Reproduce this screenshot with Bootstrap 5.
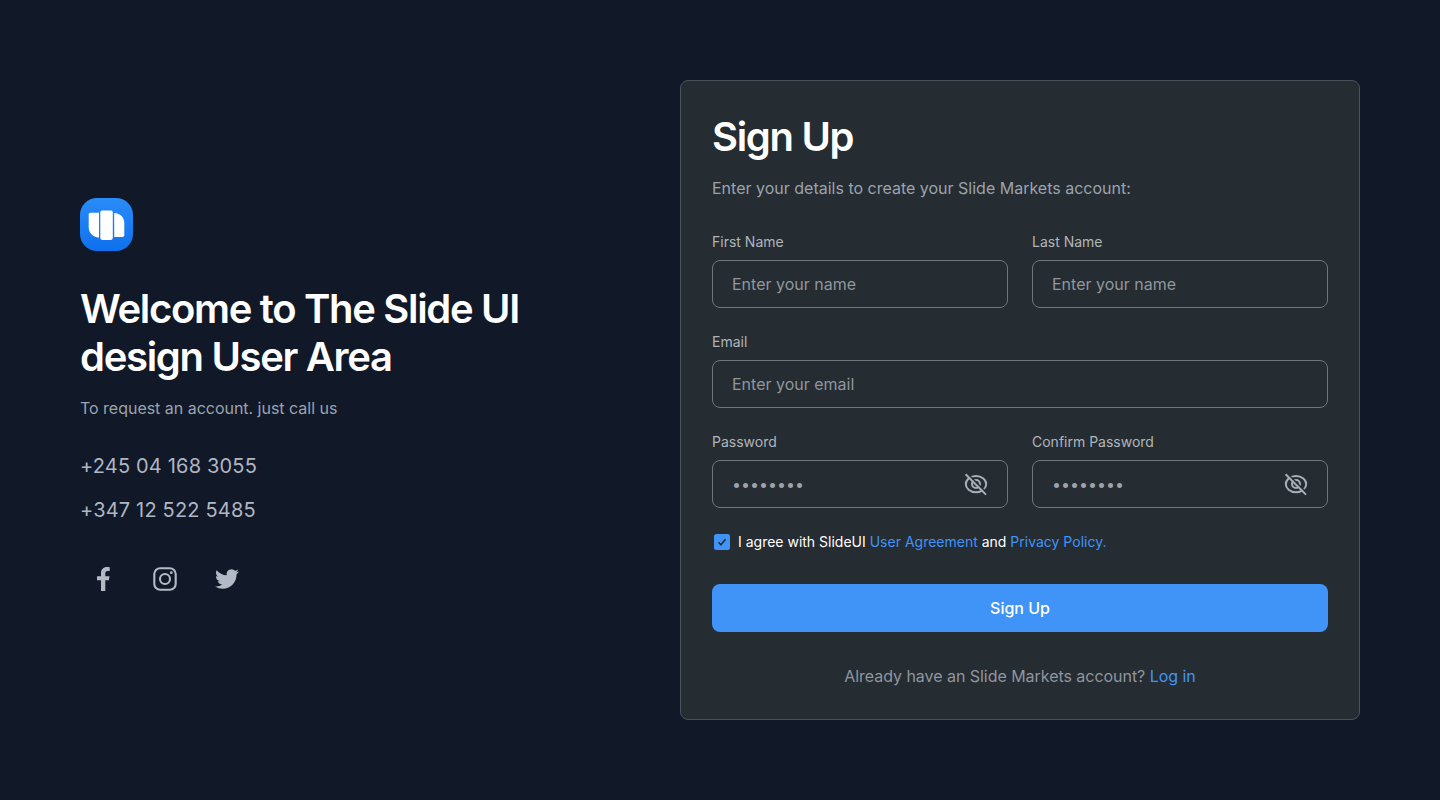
<!DOCTYPE html>
<html lang="en">
<head>
<meta charset="utf-8">
<meta name="viewport" content="width=device-width, initial-scale=1">
<title>Slide UI – Sign Up</title>
<link href="https://cdn.jsdelivr.net/npm/bootstrap@5.3.0/dist/css/bootstrap.min.css" rel="stylesheet">
<style>
  body { background: #111827; font-family: Inter, "Liberation Sans", sans-serif; font-size: 16px; line-height: 24px; color: #fff; }
  .page { height: 800px; padding: 80px; }
  .welcome { width: 520px; padding-bottom: 12px; color: #b0b6c2; }
  .title { font-size: 40px; line-height: 48px; font-weight: 600; letter-spacing: -1.32px; color: #fff; margin: 0; }
  .welcome .title { margin-top: 34px; }
  .signup .title { margin-top: 1px; }
  .intro { color: #9ba3af; }
  .welcome .intro { margin-top: 15px; letter-spacing: -.02px; }
  .phones { margin-top: 32px; }
  .phone { font-size: 20px; line-height: 28px; color: #b0b6c2; text-decoration: none; letter-spacing: .18px; }
  .social { margin-top: 43px; padding-left: 11px; gap: 38px; }
  .social a, .social svg { display: block; color: #b3bac6; }
  .signup { width: 680px; height: 640px; padding: 31px; background: #252c32; border: 1px solid #4a525c; border-radius: 8px; }
  .signup .intro { margin-top: 15px; }
  .fields { margin-top: 32px; row-gap: 24px; }
  .form-label { font-size: 14px; line-height: 20px; color: #b0b5bb; margin-bottom: 8px; display: block; }
  .field { height: 48px; border: 1px solid #6e767f; border-radius: 8px; padding: 0 19px; }
  .field .form-control, .field .form-control:focus { background: none; border: 0; padding: 0; box-shadow: none; color: #d5d9de; line-height: 24px; height: 24px; }
  .field .form-control::placeholder { color: #8f969e; opacity: 1; }
  .field .secret::placeholder { color: #9da3aa; }
  .eye { color: #a9afb8; }
  .agree { font-size: 14px; line-height: 20px; padding-left: 2px; gap: 8px; }
  .tick { width: 16px; height: 16px; }
  .accent { color: #4094f7; text-decoration: none; }
  .btn-signup { margin-top: 32px; height: 48px; border-radius: 8px; border: 0; background: #4094f7; color: #fff; font-weight: 500; font-size: 16px; }
  .footer-note { margin-top: 32px; color: #8f969e; letter-spacing: -.04px; }
</style>
</head>
<body>
<main class="page d-flex justify-content-between">
  <section class="welcome d-flex flex-column justify-content-center align-items-start">
    <svg width="53" height="53" viewBox="0 0 53 53" aria-hidden="true">
      <defs><linearGradient id="logoFill" x1="0" y1="0" x2="0" y2="1"><stop offset="0" stop-color="#2a8cf8"/><stop offset="1" stop-color="#0f70ee"/></linearGradient></defs>
      <rect width="53" height="53" rx="17" fill="url(#logoFill)"/>
      <path d="M10.500 14.800H19V39.500C12.500 39 8.700 35 8.700 29V16.600Q8.700 14.800 10.500 14.800Z" fill="#fff"/>
      <rect x="20.300" y="12.600" width="12.500" height="29.300" rx="1.800" fill="#fff"/>
      <path d="M34.200 14.900C40.500 15.300 44.300 19.300 44.300 25.300V37.300Q44.300 39 42.500 39H34.200Z" fill="#fff"/>
    </svg>
    <h1 class="title">Welcome to The Slide UI<br>design User Area</h1>
    <p class="intro mb-0">To request an account. just call us</p>
    <div class="phones d-flex flex-column gap-3">
      <a class="phone" href="#">+245 04 168 3055</a>
      <a class="phone" href="#">+347 12 522 5485</a>
    </div>
    <nav class="social d-flex" aria-label="Social">
      <a href="#" aria-label="Facebook"><svg width="24" height="24" viewBox="0 0 24 24" fill="currentColor"><path d="M10 24V13.300H6V9.200H10V6.200C10 2.300 12.300 0 15.900 0C17.300 0 18.700.2 18.700.2V4.100H16.700C14.900 4.100 14.300 5.100 14.300 6.300V9.200H18.500L17.900 13.300H14.300V24Z"/></svg></a>
      <a href="#" aria-label="Instagram"><svg width="24" height="24" viewBox="0 0 24 24" fill="none" stroke="currentColor" stroke-width="2.100"><rect x="1.300" y="1.300" width="21.400" height="21.400" rx="5.800"/><circle cx="12" cy="12" r="5"/><circle cx="18.300" cy="5.700" r="1.400" fill="currentColor" stroke="none"/></svg></a>
      <a href="#" aria-label="Twitter"><svg width="24" height="24" viewBox="0 0 24 24" fill="currentColor"><path d="M23.953 4.570a10 10 0 01-2.825.775 4.958 4.958 0 002.163-2.723c-.951.555-2.005.959-3.127 1.184a4.920 4.920 0 00-8.384 4.482C7.690 8.095 4.067 6.130 1.640 3.162a4.822 4.822 0 00-.666 2.475c0 1.710.870 3.213 2.188 4.096a4.904 4.904 0 01-2.228-.616v.060a4.923 4.923 0 003.946 4.827 4.996 4.996 0 01-2.212.085 4.936 4.936 0 004.604 3.417 9.867 9.867 0 01-6.102 2.105c-.390 0-.779-.023-1.170-.067a13.995 13.995 0 007.557 2.209c9.053 0 13.998-7.496 13.998-13.985 0-.210 0-.420-.015-.630A9.935 9.935 0 0024 4.590z"/></svg></a>
    </nav>
  </section>

  <form class="signup d-flex flex-column">
    <h2 class="title">Sign Up</h2>
    <p class="intro mb-0">Enter your details to create your Slide Markets account:</p>
    <div class="fields row gx-4">
      <div class="col-6">
        <label class="form-label" for="first">First Name</label>
        <div class="field d-flex align-items-center"><input class="form-control" id="first" placeholder="Enter your name"></div>
      </div>
      <div class="col-6">
        <label class="form-label" for="last">Last Name</label>
        <div class="field d-flex align-items-center"><input class="form-control" id="last" placeholder="Enter your name"></div>
      </div>
      <div class="col-12">
        <label class="form-label" for="email">Email</label>
        <div class="field d-flex align-items-center"><input class="form-control" id="email" type="email" placeholder="Enter your email"></div>
      </div>
      <div class="col-6">
        <label class="form-label" for="pw">Password</label>
        <div class="field d-flex align-items-center">
          <input class="form-control secret" id="pw" type="password" placeholder="••••••••">
          <svg class="eye flex-shrink-0" width="24" height="24" viewBox="0 0 24 24" fill="none" stroke="currentColor" stroke-width="2" aria-hidden="true"><path d="M12 4C18 4 22.200 7.800 22.200 12S18 20.200 12 20.200S1.800 16.200 1.800 12S6 4 12 4Z"/><circle cx="12" cy="12" r="4"/><path d="M3 1.200L23.200 21.400" stroke="#252c32" stroke-width="1.600"/><path d="M1.600 2.200L22 22.600"/></svg>
        </div>
      </div>
      <div class="col-6">
        <label class="form-label" for="pw2">Confirm Password</label>
        <div class="field d-flex align-items-center">
          <input class="form-control secret" id="pw2" type="password" placeholder="••••••••">
          <svg class="eye flex-shrink-0" width="24" height="24" viewBox="0 0 24 24" fill="none" stroke="currentColor" stroke-width="2" aria-hidden="true"><path d="M12 4C18 4 22.200 7.800 22.200 12S18 20.200 12 20.200S1.800 16.200 1.800 12S6 4 12 4Z"/><circle cx="12" cy="12" r="4"/><path d="M3 1.200L23.200 21.400" stroke="#252c32" stroke-width="1.600"/><path d="M1.600 2.200L22 22.600"/></svg>
        </div>
      </div>
    </div>
    <div class="agree d-flex align-items-center mt-4">
      <svg class="tick flex-shrink-0" viewBox="0 0 16 16" role="img" aria-label="Checked"><rect width="16" height="16" rx="2.500" fill="#4094f7"/><path d="M4.500 8.300L6.900 10.700L11.500 5.300" fill="none" stroke="#252c32" stroke-width="1.600"/></svg>
      <span>I agree with SlideUI <a class="accent" href="#">User Agreement</a> and <a class="accent" href="#">Privacy Policy.</a></span>
    </div>
    <button class="btn btn-signup w-100" type="button">Sign Up</button>
    <p class="footer-note text-center mb-0">Already have an Slide Markets account? <a class="accent" href="#">Log in</a></p>
  </form>
</main>
<script src="https://cdn.jsdelivr.net/npm/bootstrap@5.3.0/dist/js/bootstrap.bundle.min.js"></script>
</body>
</html>
